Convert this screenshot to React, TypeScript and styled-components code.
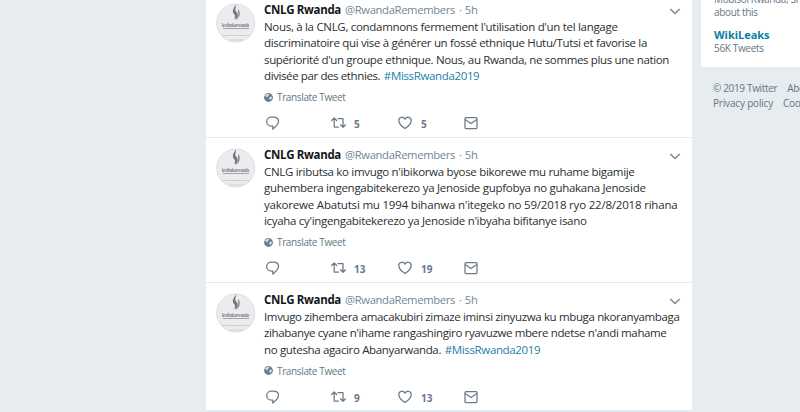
import React from "react";
import styled, { createGlobalStyle } from "styled-components";

const GlobalStyle = createGlobalStyle`
  * { box-sizing: border-box; }
  body {
    margin: 0;
    overflow: hidden;
    background: #e6ecf0;
    font-family: "Open Sans", "Noto Sans", sans-serif;
    color: #292f33;
  }
`;

const Page = styled.div`
  display: flex;
  align-items: flex-start;
  gap: 9px;
  width: 800px;
  height: 412px;
  padding-left: 206px;
  overflow: hidden;
`;

const Timeline = styled.main`
  flex: none;
  width: 486px;
  margin-top: -7px;
`;

const TweetCard = styled.article<{ $height: number }>`
  display: flex;
  gap: 8px;
  height: ${(p) => p.$height}px;
  padding: 10px 11px 0 10px;
  background: #fff;
  border-bottom: 1px solid #e3eaee;
`;

const AvatarIcon = styled.svg`
  flex: none;
  display: block;
  width: 40px;
  height: 40px;
`;

const TweetContent = styled.div`
  flex: 1;
  min-width: 0;
`;

const TweetHeader = styled.header`
  display: flex;
  align-items: center;
  height: 14px;
  white-space: pre;
`;

const Author = styled.strong`
  font-size: 11.5px;
  line-height: 14px;
  letter-spacing: -0.336px;
  color: #14171a;
`;

const Handle = styled.span`
  margin-left: 4px;
  font-size: 11.25px;
  line-height: 14px;
  letter-spacing: -0.35px;
  color: #758693;
`;

const Time = styled(Handle)`
  letter-spacing: -0.1px;
`;

const Chevron = styled.svg`
  width: 12px;
  height: 7px;
  margin: 2px 0 0 auto;
`;

const TweetText = styled.div`
  padding-top: 1.5px;
`;

const Line = styled.div<{ $spacing: number }>`
  height: 16.5px;
  font-size: 11.5px;
  line-height: 16.5px;
  letter-spacing: ${(p) => p.$spacing}px;
  white-space: pre;
`;

const Hashtag = styled.a`
  margin-left: 1px;
  letter-spacing: -0.354px;
  color: #1b80a8;
`;

const Translate = styled.div`
  display: flex;
  align-items: center;
  gap: 4px;
  height: 14px;
  margin-top: 5.5px;
  font-size: 10px;
  line-height: 14px;
  letter-spacing: -0.36px;
  color: #657786;
`;

const Globe = styled.svg`
  width: 9px;
  height: 9px;
`;

const Actions = styled.footer`
  display: grid;
  grid-template-columns: 66px 67px 66px 20px;
  height: 14px;
  margin-top: 12px;
`;

const Action = styled.div`
  display: flex;
  align-items: center;
  gap: 8px;
  color: #68798a;
`;

const ActionIcon = styled.svg`
  flex: none;
  width: 16px;
  height: 14px;
  fill: none;
  stroke: #6a7a88;
  stroke-width: 1.25;
  stroke-linejoin: round;
  stroke-linecap: round;
`;

const Count = styled.span`
  padding-top: 2px;
  font-size: 10px;
  font-weight: 700;
  line-height: 12px;
`;

const Sidebar = styled.aside`
  flex: none;
  width: 300px;
  color: #657786;
  font-size: 10px;
  line-height: 13px;
  letter-spacing: -0.34px;
  white-space: nowrap;
`;

const Trends = styled.section`
  display: flex;
  flex-direction: column;
  height: 67px;
  padding-left: 13px;
  background: #fff;
`;

const TrendDescription = styled.div`
  margin-top: -7px;
`;

const TrendName = styled.div`
  margin-top: 8px;
  font-size: 11px;
  font-weight: 700;
  line-height: 15px;
  letter-spacing: -0.035px;
  color: #0c7fa5;
`;

const TrendCount = styled.div`
  line-height: 13px;
`;

const FooterLinks = styled.footer`
  padding: 14px 0 0 12px;
`;

const FooterRow = styled.div`
  display: flex;
  gap: 10px;
  height: 15px;
  line-height: 15px;
`;

const PolicyText = styled.span`
  letter-spacing: -0.18px;
`;

function Avatar() {
  return (
    <AvatarIcon viewBox="0 0 40 40">
      <circle cx="19.7" cy="20" r="19" fill="#ebeced" stroke="#dcdfe1" />
      <path d="M20 1.5C17 6 15.5 8.5 18.5 11.5C20 13.5 18 14.5 19 16.5C23 12.5 22 10.5 20 8.5C18.5 6.5 20 4.5 20 1.5Z" fill="#74747e" />
      <path d="M22.5 6C21 9 23 10 22 12C21 14 20 15 20 17C24 14 25 10 22.5 6Z" fill="#92929a" />
      <text x="6" y="23.8" fontFamily="Liberation Serif, serif" fontSize="7" fontWeight="700" textLength="27" lengthAdjust="spacingAndGlyphs" fill="#73737b">
        kwibukarwanda
      </text>
      <path d="M7 25.5H33" stroke="#a3a3a9" strokeWidth="1" />
      <path d="M6 32.5H34M14 37H27" stroke="#cfd2d4" strokeWidth="1" />
    </AvatarIcon>
  );
}

function GlobeIcon() {
  return (
    <Globe viewBox="0 0 9 9">
      <circle cx="4.5" cy="4.5" r="4.4" fill="#667c92" />
      <path d="M3 1L5.5 .8L5 2.3L3.5 3.3L4 4.5L2.5 4L1 2.8ZM5.5 4L7.5 3.5L8 5L6.5 7L5.2 6Z" fill="#d5dfe7" />
    </Globe>
  );
}

interface TextLine {
  text: string;
  spacing: number;
  tag?: string;
}

interface TweetData {
  height: number;
  lines: TextLine[];
  retweets: number;
  likes: number;
}

const tweets: TweetData[] = [
  {
    height: 145,
    retweets: 5,
    likes: 5,
    lines: [
      { text: "Nous, à la CNLG, condamnons fermement l'utilisation d'un tel langage", spacing: -0.305 },
      { text: "discriminatoire qui vise à générer un fossé ethnique Hutu/Tutsi et favorise la", spacing: -0.334 },
      { text: "supériorité d'un groupe ethnique. Nous, au Rwanda, ne sommes plus une nation", spacing: -0.352 },
      { text: "divisée par des ethnies. ", spacing: -0.39, tag: "#MissRwanda2019" },
    ],
  },
  {
    height: 145,
    retweets: 13,
    likes: 19,
    lines: [
      { text: "CNLG iributsa ko imvugo n'ibikorwa byose bikorewe mu ruhame bigamije", spacing: -0.319 },
      { text: "guhembera ingengabitekerezo ya Jenoside gupfobya no guhakana Jenoside", spacing: -0.29 },
      { text: "yakorewe Abatutsi mu 1994 bihanwa n'itegeko no 59/2018 ryo 22/8/2018 rihana", spacing: -0.197 },
      { text: "icyaha cy'ingengabitekerezo ya Jenoside n'ibyaha bifitanye isano", spacing: -0.311 },
    ],
  },
  {
    height: 128,
    retweets: 9,
    likes: 13,
    lines: [
      { text: "Imvugo zihembera amacakubiri zimaze iminsi zinyuzwa ku mbuga nkoranyambaga", spacing: -0.36 },
      { text: "zihabanye cyane n'ihame rangashingiro ryavuzwe mbere ndetse n'andi mahame", spacing: -0.369 },
      { text: "no gutesha agaciro Abanyarwanda. ", spacing: -0.347, tag: "#MissRwanda2019" },
    ],
  },
];

function Tweet({ height, lines, retweets, likes }: TweetData) {
  return (
    <TweetCard $height={height}>
      <Avatar />
      <TweetContent>
        <TweetHeader>
          <Author>CNLG Rwanda</Author>
          <Handle>@RwandaRemembers</Handle>
          <Time>· 5h</Time>
          <Chevron viewBox="0 0 12 7">
            <path d="M1.3 1L6 5.5L10.7 1" fill="none" stroke="#798996" strokeWidth="1.6" />
          </Chevron>
        </TweetHeader>
        <TweetText>
          {lines.map((line) => (
            <Line key={line.text} $spacing={line.spacing}>
              {line.text}
              {line.tag && <Hashtag>{line.tag}</Hashtag>}
            </Line>
          ))}
        </TweetText>
        <Translate>
          <GlobeIcon />
          Translate Tweet
        </Translate>
        <Actions>
          <Action>
            <ActionIcon viewBox="0 0 16 14">
              <path d="M7.5 1.1H9.5C12.5 1.1 14.5 3 14.5 5.5C14.5 8.7 11.5 10.8 8.8 13V10H7.5C4.7 10 2.7 8 2.7 5.5S4.7 1.1 7.5 1.1Z" />
            </ActionIcon>
          </Action>
          <Action>
            <ActionIcon viewBox="0 0 16 14">
              <path d="M1.7 4.5L4.2 2L6.7 4.5M4.2 2.5V11H8.5M8 2.5H13V11M10.5 8.8L13 11.3L15.5 8.8" />
            </ActionIcon>
            <Count>{retweets}</Count>
          </Action>
          <Action>
            <ActionIcon viewBox="0 0 16 14">
              <path d="M8 12.5C4.5 10.3 1.8 7.5 1.8 4.5C1.8 .8 6.3 .1 8 3.3C9.7 .1 14.2 .8 14.2 4.5C14.2 7.5 11.5 10.3 8 12.5Z" />
            </ActionIcon>
            <Count>{likes}</Count>
          </Action>
          <Action>
            <ActionIcon viewBox="0 0 16 14">
              <rect x="2" y="1.5" width="12" height="11" rx="1" />
              <path d="M2.5 3.7L8 7.5L13.5 3.7" />
            </ActionIcon>
          </Action>
        </Actions>
      </TweetContent>
    </TweetCard>
  );
}

export default function App() {
  return (
    <>
      <GlobalStyle />
      <Page>
        <Timeline>
          {tweets.map((tweet) => (
            <Tweet key={tweet.lines[0].text} {...tweet} />
          ))}
        </Timeline>
        <Sidebar>
          <Trends>
            <TrendDescription>
              Mobisol Rwanda, Shema
              <br />
              about this
            </TrendDescription>
            <TrendName>WikiLeaks</TrendName>
            <TrendCount>56K Tweets</TrendCount>
          </Trends>
          <FooterLinks>
            <FooterRow>
              <span>© 2019 Twitter</span>
              <span>About</span>
            </FooterRow>
            <FooterRow>
              <PolicyText>Privacy policy</PolicyText>
              <span>Cookies</span>
            </FooterRow>
          </FooterLinks>
        </Sidebar>
      </Page>
    </>
  );
}
